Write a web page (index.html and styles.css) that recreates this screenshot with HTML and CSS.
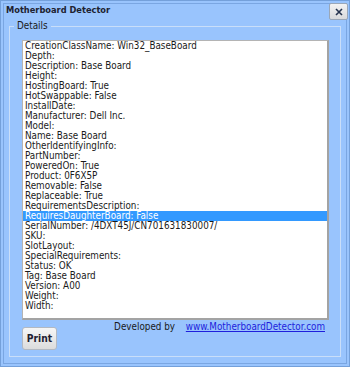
FILE: index.html
```html
<!DOCTYPE html>
<html lang="en">
<head>
  <meta charset="UTF-8">
  <meta name="viewport" content="width=device-width, initial-scale=1.0">
  <title>Motherboard Detector</title>
  <link rel="stylesheet" href="styles.css">
</head>
<body>
  <div class="window">
    <div class="frame">
      <header class="titlebar">
        <span class="title">Motherboard Detector</span>
        <button class="close" aria-label="Close">
          <svg width="8" height="8" viewBox="0 0 8 8">
            <path d="M1 1 L7 7 M7 1 L1 7" stroke="#26344f" stroke-width="1.6" fill="none"/>
          </svg>
        </button>
      </header>
      <fieldset class="details">
        <legend>Details</legend>
        <div class="listbox">
          <div class="row">CreationClassName: Win32_BaseBoard</div>
          <div class="row">Depth:</div>
          <div class="row">Description: Base Board</div>
          <div class="row">Height:</div>
          <div class="row">HostingBoard: True</div>
          <div class="row">HotSwappable: False</div>
          <div class="row">InstallDate:</div>
          <div class="row">Manufacturer: Dell Inc.</div>
          <div class="row">Model:</div>
          <div class="row">Name: Base Board</div>
          <div class="row">OtherIdentifyingInfo:</div>
          <div class="row">PartNumber:</div>
          <div class="row">PoweredOn: True</div>
          <div class="row">Product: 0F6X5P</div>
          <div class="row">Removable: False</div>
          <div class="row">Replaceable: True</div>
          <div class="row">RequirementsDescription:</div>
          <div class="row selected">RequiresDaughterBoard: False</div>
          <div class="row">SerialNumber: /4DXT45J/CN701631830007/</div>
          <div class="row">SKU:</div>
          <div class="row">SlotLayout:</div>
          <div class="row">SpecialRequirements:</div>
          <div class="row">Status: OK</div>
          <div class="row">Tag: Base Board</div>
          <div class="row">Version: A00</div>
          <div class="row">Weight:</div>
          <div class="row">Width:</div>
        </div>
        <div class="footer">
          <button class="print">Print</button>
          <span class="credit">Developed by <a href="#">www.MotherboardDetector.com</a></span>
        </div>
      </fieldset>
    </div>
  </div>
</body>
</html>
```

FILE: styles.css
```css
/* Window */
body {
  margin: 0;
  font-family: 'DejaVu Sans Condensed', 'DejaVu Sans', sans-serif;
  font-size: 9.8px;
  color: #1a1a1a;
  background: #99c4fd;
}
.window {
  width: 350px;
  height: 367px;
  box-sizing: border-box;
  border: 1px solid #74a0da;
  padding: 2px;
  background: #99c4fd;
}
.frame {
  height: 100%;
  box-sizing: border-box;
  border: 1px solid #7aa6e2;
  display: flex;
  flex-direction: column;
}

/* Title bar */
.titlebar {
  display: flex;
  justify-content: space-between;
  height: 20px;
  padding-left: 2px;
}
.title {
  font-weight: bold;
  font-size: 9.2px;
  line-height: 12px;
  color: #202230;
}
.close {
  width: 19px;
  height: 17px;
  margin: -1px -2px 0 0;
  padding: 0;
  border: 1px solid #9aa7b8;
  border-radius: 2px;
  background: linear-gradient(#f3f3f3, #d9dadc);
  display: flex;
  align-items: center;
  justify-content: center;
}

/* Group box */
.details {
  margin: 1px 5px 6px 5px;
  padding: 0;
  border: 1px solid #c9def9;
  flex: 1;
  display: flex;
  flex-direction: column;
}
.details legend {
  margin-left: 4px;
  padding: 0 3px;
  line-height: 10px;
  color: #1a1a1a;
}
.listbox {
  margin: 9px 11px 0 12px;
  height: 280px;
  box-sizing: border-box;
  background: #fff;
  border: 1px solid #b4b4b4;
  border-right: 2px solid #a3a3a3;
  border-bottom: 2px solid #a3a3a3;
}
.row {
  line-height: 10px;
  height: 10px;
  padding-left: 2px;
  white-space: nowrap;
}
.row.selected {
  background: #3399ff;
  color: #fff;
}

/* Footer */
.footer {
  display: flex;
  align-items: flex-start;
  padding: 2px 0 6px 12px;
}
.print {
  margin-top: 5px;
  width: 35px;
  height: 23px;
  padding: 0;
  border: 1px solid #b3b9c2;
  border-radius: 3px;
  background: linear-gradient(#f6f6f6, #dcdcdc);
  font-family: inherit;
  font-weight: bold;
  font-size: 10.2px;
  color: #1e2030;
}
.credit {
  margin-left: auto;
  margin-right: 15px;
  line-height: 10px;
  color: #1a1a1a;
}
.credit a {
  margin-left: 8px;
  color: #1e1edc;
}
```
